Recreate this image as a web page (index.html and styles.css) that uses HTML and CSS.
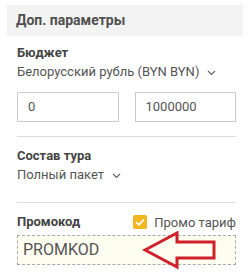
FILE: index.html
```html
<!DOCTYPE html>
<html>
<head>
<meta charset="utf-8">
<link rel="stylesheet" href="styles.css">
</head>
<body>
<div class="panel">
  <div class="header">Доп. параметры</div>
  <div class="section first">
    <div class="label">Бюджет</div>
    <div class="select">Белорусский рубль (BYN BYN)<svg class="chev" width="9" height="6" viewBox="0 0 9 6"><path d="M1 1l3.5 3.5L8 1" fill="none" stroke="#666" stroke-width="1.2"/></svg></div>
    <div class="range">
      <div class="input">0</div>
      <div class="input">1000000</div>
    </div>
  </div>
  <div class="section second">
    <div class="label">Состав тура</div>
    <div class="select">Полный пакет<svg class="chev" width="9" height="6" viewBox="0 0 9 6"><path d="M1 1l3.5 3.5L8 1" fill="none" stroke="#666" stroke-width="1.2"/></svg></div>
  </div>
  <div class="section third">
    <div class="promo-row">
      <div class="label">Промокод</div>
      <div class="check"><span class="box"><svg width="14" height="14" viewBox="0 0 14 14"><path d="M3.2 7.2l2.6 2.6 5-5.2" fill="none" stroke="#fff" stroke-width="1.8"/></svg></span>Промо тариф</div>
    </div>
    <div class="promo-wrap">
      <div class="promo">PROMKOD</div>
      <svg class="arrow" width="80" height="42" viewBox="0 0 80 42"><path d="M3 19 L35 2 L35 11 L72 11 L72 27 L35 27 L35 36 Z" fill="none" stroke="#d0212b" stroke-width="3" stroke-linejoin="miter"/></svg>
    </div>
  </div>
</div>
</body>
</html>
```
FILE: styles.css
```css
html, body { margin: 0; padding: 0; background: #fff; }
body { font-family: Roboto, "Liberation Sans", sans-serif; color: #555; width: 250px; height: 280px; overflow: hidden; }
.panel { padding-top: 5px; }
.header {
  margin: 0 7px;
  height: 31px;
  background: #f3f3f3;
  font-weight: bold;
  font-size: 14px;
  color: #505050;
  line-height: 31px;
  padding-left: 9px;
}
.section { margin: 0 14px 0 17px; }
.first { padding-top: 8px; padding-bottom: 14px; border-bottom: 1px solid #ddd; }
.second { padding-top: 10px; padding-bottom: 18px; border-bottom: 1px solid #ddd; }
.third { padding-top: 10px; }
.label { font-weight: bold; font-size: 13px; line-height: 18px; color: #444; }
.select { font-size: 13px; line-height: 19px; color: #555; display: flex; align-items: center; }
.chev { margin-left: 8px; margin-top: 2px; }
.range { display: flex; gap: 16px; margin-top: 11px; }
.input {
  flex: 1;
  height: 28px;
  border: 1px solid #ccc;
  font-size: 13px;
  line-height: 28px;
  padding-left: 10px;
  color: #555;
}
.promo-row { display: flex; justify-content: space-between; align-items: center; }
.check { display: flex; align-items: center; font-size: 13px; color: #555; }
.box { width: 14px; height: 14px; border-radius: 2px; background: #f3b61f; display: block; margin-right: 7px; }
.box svg { display: block; }
.promo-wrap { position: relative; margin-top: 4px; }
.promo {
  height: 28px;
  border: 1px dashed #aaa;
  background: #fdfdf0;
  font-size: 16px;
  line-height: 28px;
  padding-left: 5px;
  color: #555;
}
.arrow { position: absolute; left: 125px; top: -4px; }
```
